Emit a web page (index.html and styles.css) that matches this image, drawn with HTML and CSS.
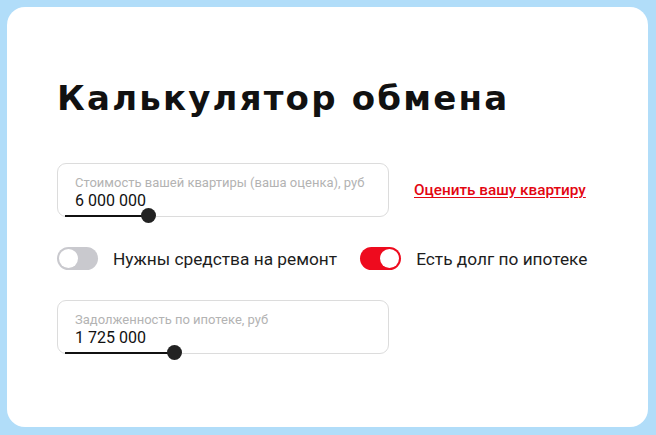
FILE: index.html
```html
<!DOCTYPE html>
<html lang="ru">
<head>
  <meta charset="UTF-8">
  <meta name="viewport" content="width=device-width, initial-scale=1.0">
  <title>Калькулятор обмена</title>
  <link rel="stylesheet" href="styles.css">
</head>
<body>
  <div class="card">
    <h1 class="title">Калькулятор обмена</h1>

    <div class="row">
      <div class="field">
        <div class="field-label">Стоимость вашей квартиры (ваша оценка), руб</div>
        <div class="field-value">6 000 000</div>
        <div class="slider">
          <div class="slider-fill" style="width: 83px"></div>
          <span class="slider-knob"></span>
        </div>
      </div>
      <a class="link" href="#">Оценить вашу квартиру</a>
    </div>

    <div class="toggles">
      <label class="toggle">
        <span class="switch"><span class="switch-knob"></span></span>
        Нужны средства на ремонт
      </label>
      <label class="toggle">
        <span class="switch on"><span class="switch-knob"></span></span>
        Есть долг по ипотеке
      </label>
    </div>

    <div class="field">
      <div class="field-label">Задолженность по ипотеке, руб</div>
      <div class="field-value">1 725 000</div>
      <div class="slider">
        <div class="slider-fill" style="width: 109px"></div>
        <span class="slider-knob"></span>
      </div>
    </div>
  </div>
</body>
</html>
```

FILE: styles.css
```css
body {
  margin: 0;
  padding: 7px 8px 8px 7px;
  background-color: #b1ddf9;
  font-family: Roboto, "Noto Sans", sans-serif;
}
.card {
  height: 420px;
  box-sizing: border-box;
  padding: 71px 50px 0;
  background-color: #fff;
  border-radius: 18px;
}
.title {
  margin: 0 0 45px;
  font-family: "DejaVu Sans", sans-serif;
  font-size: 34px;
  line-height: 40px;
  font-weight: bold;
  color: #111;
  letter-spacing: 2.2px;
}
.row {
  display: flex;
  align-items: center;
  gap: 25px;
}
.field {
  position: relative;
  width: 332px;
  height: 54px;
  box-sizing: border-box;
  padding: 11px 17px 0;
  border: 1px solid #dcdcdc;
  border-radius: 9px;
}
.field-label {
  font-size: 13px;
  line-height: 16px;
  color: #b3b3b3;
}
.field-value {
  font-size: 16px;
  line-height: 20px;
  color: #111;
}
.slider {
  position: absolute;
  left: 7px;
  bottom: -7px;
  display: flex;
  align-items: center;
}
.slider-fill {
  height: 2px;
  background-color: #111;
}
.slider-knob {
  width: 15px;
  height: 15px;
  margin-left: -7px;
  border-radius: 50%;
  background-color: #222;
}
.link {
  font-size: 15.3px;
  font-weight: 500;
  color: #e30611;
  text-decoration: underline;
  text-underline-offset: 2px;
}
.toggles {
  display: flex;
  gap: 23px;
  margin: 30px 0 30px;
}
.toggle {
  display: flex;
  align-items: center;
  gap: 15px;
  font-size: 17.3px;
  color: #1d1d1d;
}
.switch {
  display: flex;
  align-items: center;
  width: 41px;
  height: 23px;
  box-sizing: border-box;
  padding: 2px;
  border-radius: 12px;
  background-color: #c9c9ce;
}
.switch-knob {
  width: 19px;
  height: 19px;
  border-radius: 50%;
  background-color: #fff;
}
.switch.on {
  justify-content: flex-end;
  background-color: #ee0b1e;
}
```
